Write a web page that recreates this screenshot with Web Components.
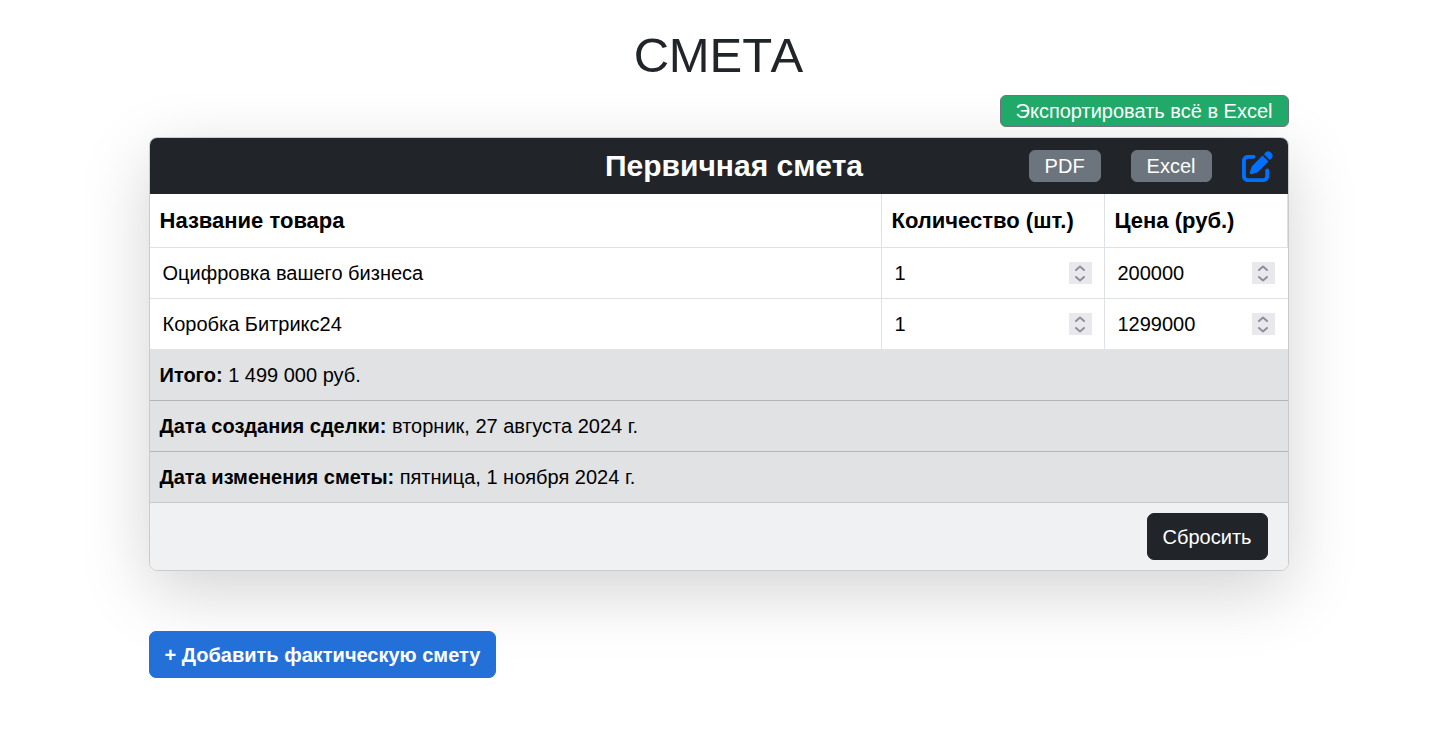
<!DOCTYPE html>
<html lang="ru">
<head>
<meta charset="utf-8">
<meta name="viewport" content="width=device-width, initial-scale=1">
<title>Смета</title>
<style>
  body { margin: 0; background: #fff; color: #212529; font: 20px/30px "Liberation Sans", Arial, sans-serif; }
</style>
</head>
<body>
<estimate-page>
  <action-button slot="tools" variant="success" size="small">Экспортировать всё в Excel</action-button>
  <estimate-card>
    <span slot="title">Первичная смета</span>
    <action-button slot="actions" size="small">PDF</action-button>
    <action-button slot="actions" size="small">Excel</action-button>
    <edit-button slot="actions"></edit-button>
    <estimate-table></estimate-table>
    <summary-row label="Итого:">1 499 000 руб.</summary-row>
    <summary-row label="Дата создания сделки:">вторник, 27 августа 2024 г.</summary-row>
    <summary-row label="Дата изменения сметы:">пятница, 1 ноября 2024 г.</summary-row>
    <action-button slot="footer" variant="dark">Сбросить</action-button>
  </estimate-card>
  <action-button slot="bottom" variant="primary">+ Добавить фактическую смету</action-button>
</estimate-page>

<script>
function define(name, html, setup) {
  const template = document.createElement('template');
  template.innerHTML = html;
  customElements.define(name, class extends HTMLElement {
    constructor() {
      super();
      this.attachShadow({ mode: 'open' }).append(template.content.cloneNode(true));
    }
    connectedCallback() {
      if (setup) setup(this, this.shadowRoot);
    }
  });
}

define('action-button', `
  <style>
    :host { display: block; --bg: #6c757d; --edge: #6c757d; }
    :host([variant="success"]) { --bg: #20a968; }
    :host([variant="dark"]) { --bg: #212529; --edge: #212529; }
    :host([variant="primary"]) { --bg: #2370d8; --edge: #2370d8; font-weight: 700; }
    button {
      display: block; box-sizing: border-box; margin: 0; padding: 8px 15px;
      border: 1px solid var(--edge); border-radius: 7px;
      background: var(--bg); color: #fff; font: inherit; line-height: 29px; white-space: nowrap; cursor: pointer;
    }
    :host(:not([size="small"])) button { padding: 9px 15px 7px; }
    :host([size="small"]) button { padding: 0 15px; line-height: 30px; border-radius: 6px; }
  </style>
  <button type="button"><slot></slot></button>`);

define('edit-button', `
  <style>
    :host { display: block; }
    button { display: block; padding: 0; border: 0; background: none; color: #0070ff; cursor: pointer; }
    svg { display: block; width: 31px; height: 31px; }
  </style>
  <button type="button" aria-label="Редактировать">
    <svg viewBox="0 0 512 512" fill="currentColor" aria-hidden="true"><path d="M471.6 21.7c-21.9-21.9-57.3-21.9-79.2 0L362.3 51.7l97.9 97.9 30.1-30.1c21.9-21.9 21.9-57.3 0-79.2L471.6 21.7zm-299.2 220c-6.1 6.1-10.8 13.6-13.5 21.9l-29.6 88.8c-2.9 8.6-.6 18.1 5.8 24.6s15.9 8.7 24.6 5.8l88.8-29.6c8.2-2.7 15.7-7.4 21.9-13.5L437.7 172.3 339.7 74.3 172.4 241.7zM96 64C43 64 0 107 0 160V416c0 53 43 96 96 96H352c53 0 96-43 96-96V320c0-17.7-14.3-32-32-32s-32 14.3-32 32v96c0 17.7-14.3 32-32 32H96c-17.7 0-32-14.3-32-32V160c0-17.7 14.3-32 32-32h96c17.7 0 32-14.3 32-32s-14.3-32-32-32H96z"/></svg>
  </button>`);

define('number-field', `
  <style>
    :host { display: flex; align-items: center; padding: 0 2px 0 3px; }
    input {
      flex: 1; min-width: 0; width: 0; height: 30px; box-sizing: border-box; margin: 0; padding: 0; border: 0;
      background: none; color: inherit; font: inherit; outline: 0; appearance: textfield; -moz-appearance: textfield;
    }
    input::-webkit-inner-spin-button { appearance: none; margin: 0; }
    .spin { display: flex; flex-direction: column; width: 23px; height: 22px; background: #e9e9ed; }
    button { flex: 1; display: flex; justify-content: center; align-items: center; padding: 0; border: 0; background: none; color: #8f8f9d; }
    svg { display: block; width: 10px; height: 6px; fill: none; stroke: currentColor; stroke-width: 2; stroke-linecap: round; stroke-linejoin: round; }
  </style>
  <input type="number" min="0">
  <span class="spin">
    <button type="button" tabindex="-1" aria-label="Больше"><svg viewBox="0 0 10 6"><path d="M1 5l4-3.500 4 3.500"/></svg></button>
    <button type="button" tabindex="-1" aria-label="Меньше"><svg viewBox="0 0 10 6"><path d="M1 1l4 3.500 4-3.500"/></svg></button>
  </span>`, (host, root) => {
  const input = root.querySelector('input');
  const [up, down] = root.querySelectorAll('button');
  input.value = host.getAttribute('value');
  input.setAttribute('aria-label', host.getAttribute('label'));
  up.onclick = () => input.stepUp();
  down.onclick = () => input.stepDown();
});

define('estimate-table', `
  <style>
    :host { display: block; color: #000; background: #fff; }
    table { width: 100%; border-collapse: separate; border-spacing: 0; table-layout: fixed; }
    .qty { width: 223px; }
    .price { width: 183px; }
    th { box-sizing: border-box; padding: 10px; text-align: left; font-size: 22px; line-height: 33px; white-space: nowrap; }
    td { padding: 10px; }
    th, td { border-right: 1px solid #dee2e6; border-bottom: 1px solid #dee2e6; }
    td:last-child { border-right: 0; padding-right: 11px; }
    tbody tr:last-child td { border-bottom-color: #e1e3e5; }
    .name {
      display: block; box-sizing: border-box; width: 100%; height: 30px; margin: 0; padding: 0 2px 0 3px; border: 0;
      background: none; color: inherit; font: inherit; outline: 0;
    }
  </style>
  <table>
    <colgroup><col><col class="qty"><col class="price"></colgroup>
    <thead><tr><th>Название товара</th><th>Количество (шт.)</th><th>Цена (руб.)</th></tr></thead>
    <tbody>
      <tr>
        <td><input class="name" type="text" aria-label="Название товара" value="Оцифровка вашего бизнеса"></td>
        <td><number-field label="Количество (шт.)" value="1"></number-field></td>
        <td><number-field label="Цена (руб.)" value="200000"></number-field></td>
      </tr>
      <tr>
        <td><input class="name" type="text" aria-label="Название товара" value="Коробка Битрикс24"></td>
        <td><number-field label="Количество (шт.)" value="1"></number-field></td>
        <td><number-field label="Цена (руб.)" value="1299000"></number-field></td>
      </tr>
    </tbody>
  </table>`);

define('summary-row', `
  <style>
    :host { display: block; padding: 10px; border-bottom: 1px solid #b3b5b8; background: #e1e2e4; color: #000; }
    :host(:last-of-type) { border-bottom-color: #c6c8ca; }
  </style>
  <strong></strong> <slot></slot>`, (host, root) => {
  root.querySelector('strong').textContent = host.getAttribute('label');
});

define('estimate-card', `
  <style>
    :host {
      display: block; border: 1px solid #c9cbcd; border-radius: 8px; overflow: hidden;
      background: #fff; box-shadow: 0 20px 68px rgba(0, 0, 0, .175);
    }
    header {
      display: grid; grid-template-columns: 1fr auto 1fr; align-items: center;
      min-height: 56px; padding: 0 15px 0 46px; background: #212529; color: #fff;
    }
    h2 { grid-column: 2; margin: 0; font-size: 30px; line-height: 36px; }
    .actions { display: flex; justify-content: flex-end; align-items: center; gap: 30px; }
    footer { display: flex; justify-content: flex-end; padding: 10px 20px; background: #f0f1f3; }
  </style>
  <header>
    <h2><slot name="title"></slot></h2>
    <div class="actions"><slot name="actions"></slot></div>
  </header>
  <slot></slot>
  <footer><slot name="footer"></slot></footer>`);

define('estimate-page', `
  <style>
    :host { display: block; box-sizing: border-box; max-width: 1140px; margin: 0 auto; padding: 25px 0; }
    h1 { margin: 0 0 10px; font-size: 49px; line-height: 60px; font-weight: 400; text-align: center; }
    .tools { display: flex; justify-content: flex-end; margin-bottom: 10px; }
    .bottom { display: flex; margin-top: 60px; }
    .tools, .bottom { position: relative; }
  </style>
  <h1>СМЕТА</h1>
  <div class="tools"><slot name="tools"></slot></div>
  <slot></slot>
  <div class="bottom"><slot name="bottom"></slot></div>`);
</script>
</body>
</html>
